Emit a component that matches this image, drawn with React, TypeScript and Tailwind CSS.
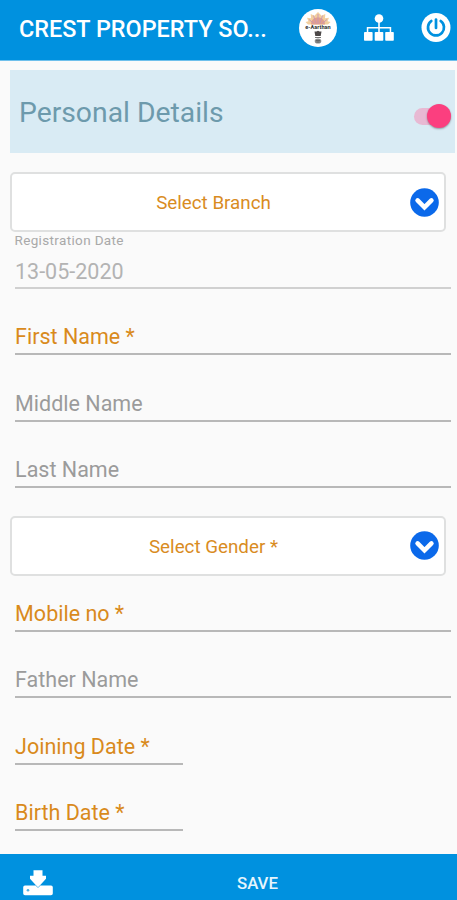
import React, { useState } from 'react';

type Field = {
  name: string;
  label: string;
  required?: boolean;
  short?: boolean;
};

const nameFields: Field[] = [
  { name: 'firstName', label: 'First Name *', required: true },
  { name: 'middleName', label: 'Middle Name' },
  { name: 'lastName', label: 'Last Name' },
];

const contactFields: Field[] = [
  { name: 'mobile', label: 'Mobile no *', required: true },
  { name: 'fatherName', label: 'Father Name' },
  { name: 'joiningDate', label: 'Joining Date *', required: true, short: true },
  { name: 'birthDate', label: 'Birth Date *', required: true, short: true },
];

const LogoIcon: React.FC = () => (
  <svg width="38" height="38" viewBox="0 0 38 38">
    <circle cx="19" cy="19" r="19" fill="#fff" />
    {/* rising sun */}
    <path
      d="M9 15.500 6.500 13l3-.7-1.500-3.600 4 .6-.3-4.200 3.700 1.700L19 3l3.600 3.800 3.700-1.700-.3 4.200 4-.6-1.500 3.600 3 .7-2.500 2.500z"
      fill="#f3cf9f"
    />
    <path d="M12 15.500c0-4.500 3-7 7-7s7 2.500 7 7z" fill="#e3a08c" />
    <path d="M19 5v10M14.500 6.500l2.500 8M23.500 6.500 21 14.500M10 10.500l5 4M28 10.500l-5 4" stroke="#c795b4" strokeWidth=".9" />
    <text x="19" y="19.500" textAnchor="middle" fontSize="5.600" fontWeight="700" fill="#303030" className="font-['Roboto',sans-serif]">
      e-Aarthan
    </text>
    {/* emblem */}
    <path d="M15.500 22.500h2l1.500-.8 1.500.8h2l-.8 4.500h-5.400z" fill="#4c4848" />
    <path d="M16 28h6v1h-6z" fill="#777" />
    <ellipse cx="19" cy="32" rx="3.300" ry="2.600" fill="#8d8d8d" />
    <path d="M17 31.500h4M17.500 33h3" stroke="#555" strokeWidth=".7" />
  </svg>
);

const SitemapIcon: React.FC = () => (
  <svg width="30" height="28" viewBox="0 0 30 28" fill="#fff">
    <circle cx="15" cy="4.500" r="4.300" />
    <path d="M14.200 8h1.600v5h11.400v6h-1.500v-4.400h-9.900V19h-1.600v-4.400H4.300V19H2.800v-6h11.400z" />
    <rect x="0" y="18" width="8.600" height="8.700" rx=".8" />
    <rect x="10.700" y="18" width="8.600" height="8.700" rx=".8" />
    <rect x="21.200" y="18" width="8.600" height="8.700" rx=".8" />
  </svg>
);

const PowerIcon: React.FC = () => (
  <svg width="30" height="30" viewBox="0 0 30 30" fill="none">
    <circle cx="15" cy="14.500" r="14.500" fill="#fff" />
    <path d="M10.300 8a8 8 0 1 0 9.400 0" stroke="#0091df" strokeWidth="2.700" strokeLinecap="round" />
    <path d="M15 6.500v8.500" stroke="#0091df" strokeWidth="2.700" strokeLinecap="round" />
  </svg>
);

const ChevronIcon: React.FC = () => (
  <svg width="29" height="29" viewBox="0 0 29 29" fill="none">
    <circle cx="14.500" cy="14.500" r="14.300" fill="#0b69ea" />
    <path d="m7.600 12.400 6.900 6.900 6.900-6.900" stroke="#fff" strokeWidth="4.600" strokeLinecap="round" />
  </svg>
);

const DownloadIcon: React.FC = () => (
  <svg width="30" height="26" viewBox="0 0 30 26" fill="#fff">
    <path d="M2 15.500h26a1.800 1.800 0 0 1 1.800 1.800v6.100a1.800 1.800 0 0 1-1.800 1.800H2A1.800 1.800 0 0 1 .2 23.400v-6.100A1.800 1.800 0 0 1 2 15.500z" />
    <path d="M10.500.3h9v5.500H23v3L15 17.400 7 8.800v-3h3.500z" />
    <path d="m12.700 15.500 2.300 2 2.300-2" fill="none" stroke="#5fb9ea" strokeWidth=".9" />
    <circle cx="5" cy="20.300" r="1.300" fill="#4db0e6" />
  </svg>
);

const SelectBox: React.FC<{ label: string }> = ({ label }) => (
  <button className="ml-[10px] flex h-[60px] w-[436px] items-center rounded-[5px] border-2 border-[#dfe0e0] bg-white pr-[5px] pl-[2px]">
    <span className="flex-1 pt-[2px] pl-[3px] text-center text-[18.800px] leading-6 text-[#d98c1f]">{label}</span>
    <ChevronIcon />
  </button>
);

const TextField: React.FC<{ field: Field }> = ({ field }) => (
  <div className={`flex h-[66.300px] items-end ${field.short ? 'w-[168px]' : 'w-[436px]'}`}>
    <input
      name={field.name}
      placeholder={field.label}
      className={`h-[37px] w-full border-b-2 border-[#b8b8b8] bg-transparent pt-[2px] pl-[0.600px] text-[21.500px] outline-none placeholder:opacity-100 ${
        field.required ? 'placeholder:text-[#d98a1c]' : 'placeholder:text-[#9b9b9b]'
      }`}
    />
  </div>
);

const App: React.FC = () => {
  const [enabled, setEnabled] = useState(true);

  return (
    <div className="flex h-[900px] w-[457px] flex-col overflow-hidden bg-[#fafafa] font-['Roboto',sans-serif]">
      <header className="flex h-[61px] shrink-0 items-center border-b border-[#6fc0ec] bg-[#0091df] pb-[5px] pl-[19px]">
        <h1 className="w-[280px] pt-[4px] text-[23.400px] font-medium whitespace-nowrap text-white">CREST PROPERTY SO...</h1>
        <LogoIcon />
        <div className="ml-[27px]">
          <SitemapIcon />
        </div>
        <div className="ml-[27px]">
          <PowerIcon />
        </div>
      </header>

      <main className="min-h-0 flex-1 pt-[9px]">
        <section className="ml-[10px] flex h-[83px] w-[445px] items-center justify-between bg-[#d9ebf4] pr-[4px] pl-[9px]">
          <h2 className="pt-[3px] text-[28.300px] text-[#6d9aac]">Personal Details</h2>
          <button
            role="switch"
            aria-checked={enabled}
            onClick={() => setEnabled(!enabled)}
            className={`mt-[9px] flex h-[17px] w-[37px] items-center rounded-full bg-[#e8b9d3] ${enabled ? 'justify-end' : 'justify-start'}`}
          >
            <span className="h-6 w-6 shrink-0 rounded-full bg-[#fb3f7f] shadow-[0_1px_2px_rgba(0,0,0,0.35)]" />
          </button>
        </section>

        <div className="mt-[19px]">
          <SelectBox label="Select Branch" />
        </div>

        <div className="ml-[14.500px] w-[436px]">
          <div className="h-[17px] text-[13.500px] leading-[17px] tracking-[0.350px] text-[#a9a9a9]">Registration Date</div>
          <div className="flex h-[40px] items-center border-b-2 border-[#d0d0d0] pt-[8px] pl-[0.500px] text-[21.500px] text-[#b3b3b3]">
            13-05-2020
          </div>
          {nameFields.map((field) => (
            <TextField key={field.name} field={field} />
          ))}
        </div>

        <div className="mt-[28px]">
          <SelectBox label="Select Gender *" />
        </div>

        <div className="-mt-[10px] ml-[14.500px]">
          {contactFields.map((field) => (
            <TextField key={field.name} field={field} />
          ))}
        </div>
      </main>

      <footer className="flex h-[46px] shrink-0 items-center bg-[#0091df] pt-[11px] pl-[23px]">
        <DownloadIcon />
        <button className="ml-[184px] pt-[2px] text-[16.800px] font-medium text-[#e6f5fc]">SAVE</button>
      </footer>
    </div>
  );
};

export default App;
